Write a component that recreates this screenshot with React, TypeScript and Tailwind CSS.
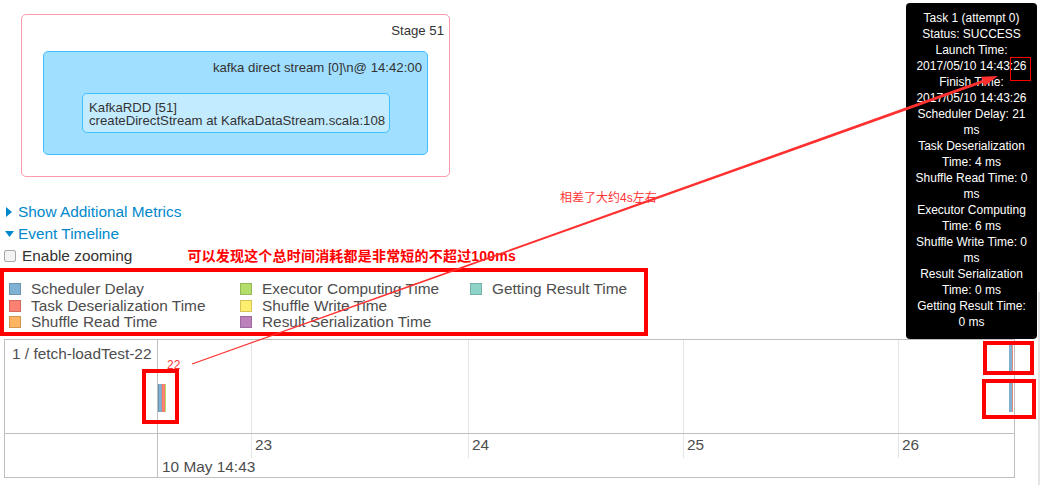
import React from 'react';

const legend = [
  [
    { label: 'Scheduler Delay', fill: 'bg-[#80B1D3]', border: 'border-[#6B94B0]' },
    { label: 'Task Deserialization Time', fill: 'bg-[#FB8072]', border: 'border-[#D26B5F]' },
    { label: 'Shuffle Read Time', fill: 'bg-[#FDB462]', border: 'border-[#D3964F]' },
  ],
  [
    { label: 'Executor Computing Time', fill: 'bg-[#B3DE69]', border: 'border-[#95B957]' },
    { label: 'Shuffle Write Time', fill: 'bg-[#FFED6F]', border: 'border-[#D5C65C]' },
    { label: 'Result Serialization Time', fill: 'bg-[#BC80BD]', border: 'border-[#9D6B9E]' },
  ],
  [{ label: 'Getting Result Time', fill: 'bg-[#8DD3C7]', border: 'border-[#75B0A6]' }],
];

const tooltipLines = [
  'Task 1 (attempt 0)',
  'Status: SUCCESS',
  'Launch Time:',
  '2017/05/10 14:43:26',
  'Finish Time:',
  '2017/05/10 14:43:26',
  'Scheduler Delay: 21',
  'ms',
  'Task Deserialization',
  'Time: 4 ms',
  'Shuffle Read Time: 0',
  'ms',
  'Executor Computing',
  'Time: 6 ms',
  'Shuffle Write Time: 0',
  'ms',
  'Result Serialization',
  'Time: 0 ms',
  'Getting Result Time:',
  '0 ms',
];

// minor axis columns: width in px, label
const columns = [
  { w: 'w-[94px]', label: '' },
  { w: 'w-[217px]', label: '23' },
  { w: 'w-[215px]', label: '24' },
  { w: 'w-[215px]', label: '25' },
];

function DagViz() {
  return (
    <div className="ml-[21px] mt-[14px] w-[429px] h-[163px] border border-[#FF99AC] rounded-[5px] bg-white text-[13.2px] text-[#333]">
      <div className="pt-[8px] pr-[5px] text-right leading-[15px]">Stage 51</div>
      <div className="ml-[21px] mt-[13px] w-[385px] h-[104px] border border-[#3EC0FF] rounded-[5px] bg-[#A0DFFF]">
        <div className="pt-[8px] pr-[5px] text-right leading-[15px]">kafka direct stream [0]\n@ 14:42:00</div>
        <div className="ml-[38px] mt-[18px] w-[308px] h-[40px] border border-[#3EC0FF] rounded-[5px] bg-[#C3EBFF] pl-[6px] pt-[7px] leading-[13px]">
          <div>KafkaRDD [51]</div>
          <div>createDirectStream at KafkaDataStream.scala:108</div>
        </div>
      </div>
    </div>
  );
}

function Legend() {
  return (
    <div className="mt-[1px] w-[648px] h-[68px] border-[4px] border-[#ff0000] flex pt-[9px] pl-[5px]">
      {legend.map((col, i) => (
        <div key={i} className={i === 0 ? 'w-[231px]' : i === 1 ? 'w-[230px]' : 'flex-1'}>
          {col.map((item) => (
            <div key={item.label} className="flex items-center h-[16.5px]">
              <span className={`w-[12px] h-[12px] border ${item.fill} ${item.border}`} />
              <span className="ml-[10px] text-[15.4px] leading-[16px] text-[#4d4d4d] whitespace-nowrap">{item.label}</span>
            </div>
          ))}
        </div>
      ))}
    </div>
  );
}

function Timeline() {
  return (
    <div className="ml-[4px] mt-[3px] w-[1011px] border border-[#bfbfbf] text-[15.4px] text-[#4d4d4d]">
      <div className="flex h-[94px] border-b border-[#bfbfbf]">
        <div className="w-[153px] border-r border-[#bfbfbf] pl-[7px] pt-[5px] leading-[18px] whitespace-nowrap">1 / fetch-loadTest-22</div>
        <div className="relative flex flex-1">
          {columns.map((c, i) => (
            <div key={i} className={`${c.w} border-r border-[#e5e5e5]`} />
          ))}
          <div className="flex-1" />
          {/* task bars */}
          <div className="absolute left-0 top-[44px] h-[28px] flex">
            <div className="w-[3px] bg-[#80B1D3] border-l border-[#6B94B0]" />
            <div className="w-[1px] bg-[#8f9fb8]" />
            <div className="w-[3px] bg-[#FB8072]" />
            <div className="w-[1px] bg-[#B3DE69]" />
          </div>
          <div className="absolute left-[851px] top-[5px] w-[4px] h-[27px] bg-[#80B1D3] border-r border-[#e88a80]" />
          <div className="absolute left-[851px] top-[43px] w-[4px] h-[29px] bg-[#80B1D3] border-r border-[#e88a80]" />
        </div>
      </div>
      <div className="flex h-[43px]">
        <div className="w-[153px] border-r border-[#bfbfbf]" />
        <div className="flex-1">
          <div className="flex h-[24px]">
            {columns.map((c, i) => (
              <div key={i} className={`${c.w} border-r border-[#e5e5e5] pl-[3px] leading-[22px]`}>
                {c.label}
              </div>
            ))}
            <div className="flex-1 pl-[3px] leading-[22px]">26</div>
          </div>
          <div className="pl-[4px] leading-[18px]">10 May 14:43</div>
        </div>
      </div>
    </div>
  );
}

function Tooltip() {
  return (
    <div className="absolute left-[906px] top-[3px] w-[131px] h-[336px] rounded-[4px] bg-black text-white text-[12px] leading-[16px] text-center pt-[7px] whitespace-nowrap">
      {tooltipLines.map((l, i) => (
        <div key={i}>{l}</div>
      ))}
    </div>
  );
}

function Arrow() {
  // from (192,364) to tip (998,76)
  return (
    <svg className="absolute inset-0 pointer-events-none" width="1041" height="485" viewBox="0 0 1041 485">
      <polygon points="192.2,364.5 191.8,363.5 982.4,80.0 983.4,82.8" fill="#ff3030" />
      <polygon points="998,76 984.6,86.1 981.2,76.7" fill="#ff3030" />
    </svg>
  );
}

export default function App() {
  return (
    <div className="relative w-[1041px] h-[485px] overflow-hidden bg-white font-['Liberation_Sans',Arial,sans-serif]">
      <DagViz />

      <div className="mt-[24px] text-[15.4px]">
        <div className="flex items-center h-[22px] text-[#0088cc]">
          <svg width="6" height="10" viewBox="0 0 6 10" className="ml-[6px]">
            <polygon points="0,0 6,5 0,10" fill="#0088cc" />
          </svg>
          <span className="ml-[6px]">Show Additional Metrics</span>
        </div>
        <div className="flex items-center h-[22px] text-[#0088cc]">
          <svg width="9" height="6" viewBox="0 0 9 6" className="ml-[5px]">
            <polygon points="0,0 9,0 4.5,6" fill="#0088cc" />
          </svg>
          <span className="ml-[4px]">Event Timeline</span>
        </div>
        <div className="flex items-center h-[22px]">
          <span className="ml-[4px] w-[12px] h-[12px] rounded-[2px] border border-[#a8a8a8] bg-[#f3f3f3]" />
          <span className="ml-[6px] text-[#333]">Enable zooming</span>
          <span className="ml-[55px] text-[14px] font-bold text-[#ff0000] tracking-[0.2px] font-['Liberation_Sans','Noto_Sans_CJK_SC',sans-serif]">
            可以发现这个总时间消耗都是非常短的不超过100ms
          </span>
        </div>
      </div>

      <Legend />
      <Timeline />

      <Tooltip />

      {/* annotations */}
      <div className="absolute left-[1010px] top-[57px] w-[21px] h-[24px] border border-[#ff0000]" />
      <div className="absolute left-[142px] top-[369px] w-[37px] h-[55px] border-[4px] border-[#ff0000]" />
      <div className="absolute left-[983px] top-[341px] w-[51px] h-[34px] border-[4px] border-[#ff0000]" />
      <div className="absolute left-[982px] top-[379px] w-[54px] h-[40px] border-[4px] border-[#ff0000]" />
      <div className="absolute left-[167px] top-[357px] text-[12px] leading-[16px] text-[#ff3333]">22</div>
      <div className="absolute left-[560px] top-[190px] text-[12px] leading-[16px] text-[#ff3333] font-['Liberation_Sans','Noto_Sans_CJK_SC',sans-serif]">
        相差了大约4s左右
      </div>
      <div className="absolute left-[1038px] top-[292px] bottom-0 w-[2px] bg-[#e3e3e3]" />
      <Arrow />
    </div>
  );
}
